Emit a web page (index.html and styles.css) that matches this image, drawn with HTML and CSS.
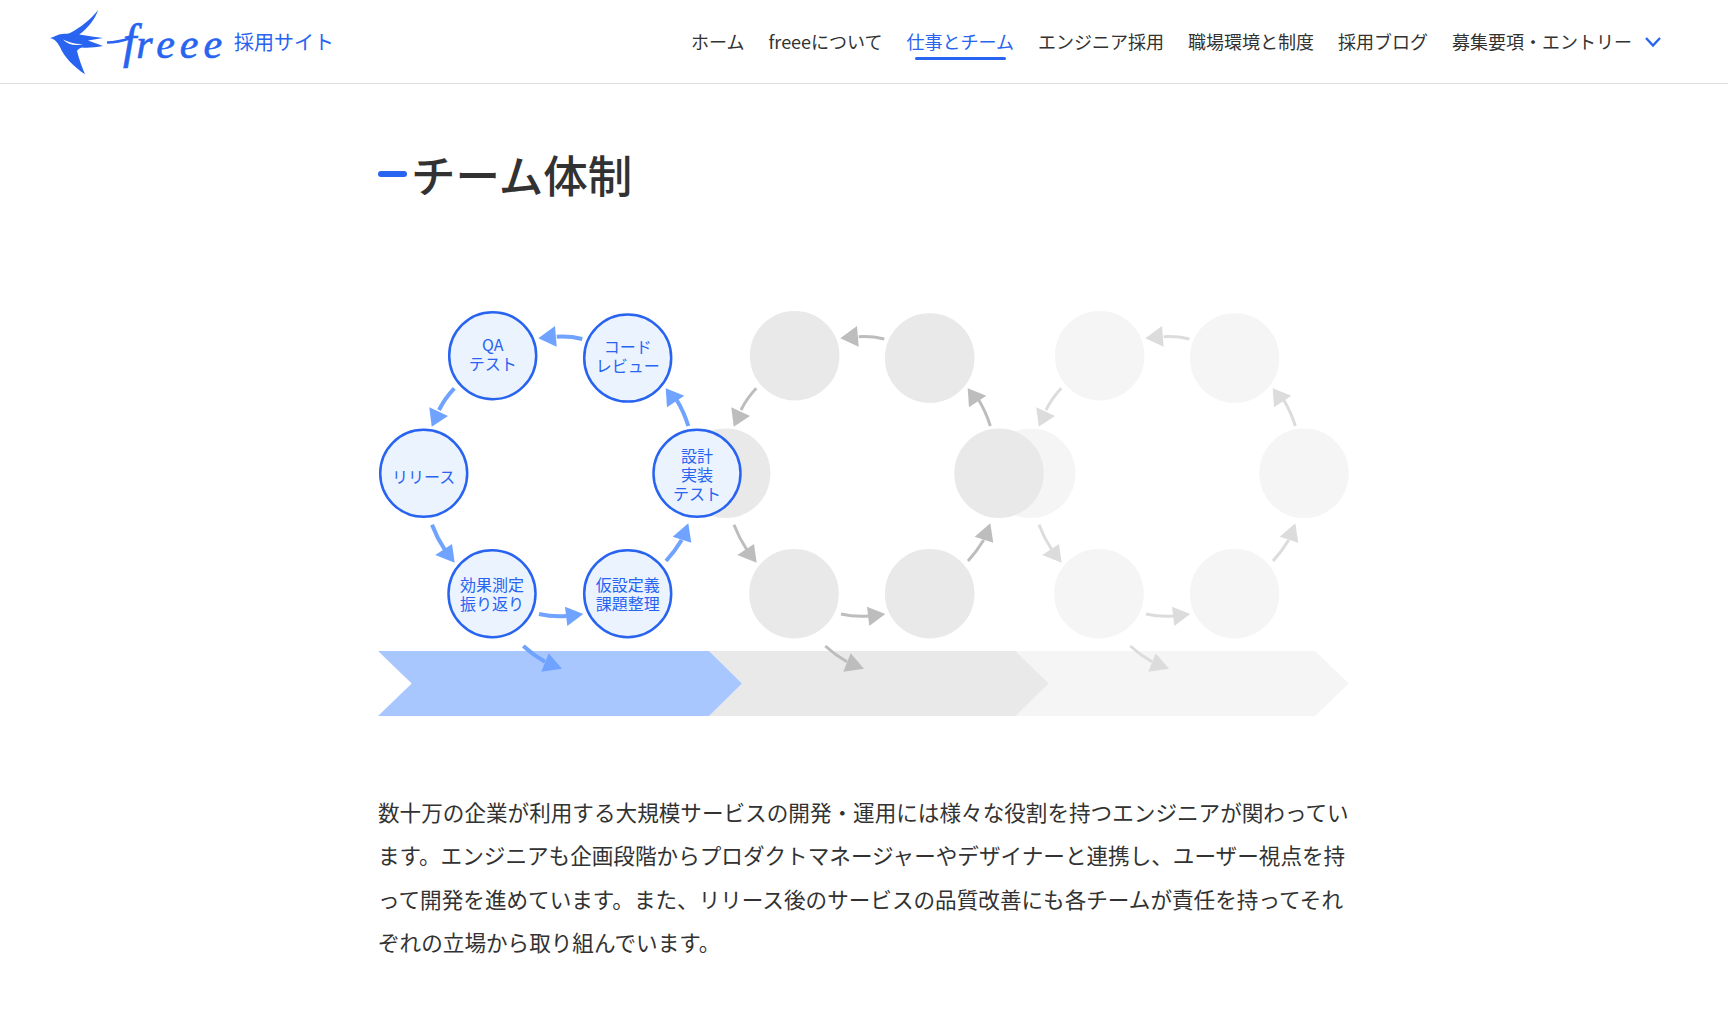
FILE: index.html
```html
<!DOCTYPE html>
<html lang="ja">
<head>
    <meta charset="UTF-8">
    <title>チーム体制 | freee 採用サイト</title>
    <link rel="stylesheet" href="styles.css">
</head>
<body>

    <header class="header">
        <a href="#" class="logo">
            <svg class="logo-bird" width="84" height="68" viewBox="48 7 84 68">
                <path d="M50 37.300 C54 36 58 33 62 33 C66 32.500 68 33 70 32 C80 27 91 18 98.300 9 C95 18 88 27 79.300 33.500 C88 35 96 36 103 37 L88 39.500 L103 45 C95 46.500 88 47 82 46.500 C80 47 78 48 77 50 C79 58 82 66 85 73.300 C74 66 64 56 60 46 C57 41 55 38 50 37.300 Z"/>
                <path class="logo-cut" d="M63 38.500 C69 41.500 76 43.500 83 43 C76 45 68 44 63 38.500 Z"/>
                <path class="logo-swash" d="M107 41.500 C114 41.500 122 40 131 37"/>
            </svg>
            <span class="logo-word"><span class="logo-f">f</span>reee</span>
            <span class="logo-sub">採用サイト</span>
        </a>
        <nav class="nav">
            <a href="#" class="nav-item">ホーム</a>
            <a href="#" class="nav-item">freeeについて</a>
            <a href="#" class="nav-item active">仕事とチーム</a>
            <a href="#" class="nav-item">エンジニア採用</a>
            <a href="#" class="nav-item">職場環境と制度</a>
            <a href="#" class="nav-item">採用ブログ</a>
            <a href="#" class="nav-item nav-more">募集要項・エントリー
                <svg class="nav-arrow" width="18" height="12" viewBox="0 0 18 12"><path d="M2 2 L9 9.500 L16 2" fill="none" stroke="#2864f0" stroke-width="2.400"/></svg>
            </a>
        </nav>
    </header>

    <main class="content">
        <h2 class="title">チーム体制</h2>

        <!-- viewBox uses page coordinates so the numbers are easy to compare -->
        <svg class="cycle" width="972" height="420" viewBox="378 300 972 420">
            <defs>
                <g id="dots">
                    <circle cx="492.700" cy="355.700" r="43.500"/>
                    <circle cx="627.700" cy="358" r="43.500"/>
                    <circle cx="423.700" cy="473.300" r="43.500"/>
                    <circle cx="697" cy="473.300" r="43.500"/>
                    <circle cx="492" cy="593.700" r="43.500"/>
                    <circle cx="627.700" cy="593.700" r="43.500"/>
                </g>
                <g id="arrows">
                    <path class="shaft" d="M582.300 339 Q570 336 556.700 336.700"/>
                    <polygon class="head" points="538.300,338.300 555,326 556.700,346.700"/>
                    <path class="shaft" d="M454.300 388.300 Q445 398 439 410"/>
                    <polygon class="head" points="431.700,426.700 429.300,407.300 448,416"/>
                    <path class="shaft" d="M688.300 426 Q684 412 676.700 400"/>
                    <polygon class="head" points="665.700,388.300 684.300,395.700 667,407.300"/>
                    <path class="shaft" d="M432 524.700 Q437 538 445 550"/>
                    <polygon class="head" points="454.700,562.700 452,544 435.300,555"/>
                    <path class="shaft" d="M539 614 Q552 617 566.700 616"/>
                    <polygon class="head" points="583.300,614 565,606.700 567.300,626"/>
                    <path class="shaft" d="M666 561 Q675 551 681.700 540"/>
                    <polygon class="head" points="688.300,523.300 672.700,536.700 691.300,542.700"/>
                    <path class="shaft" d="M523.300 646 Q533 655 545 661.700"/>
                    <polygon class="head" points="562,668.700 548.700,653.300 541.300,671.700"/>
                </g>
            </defs>

            <polygon class="band-light" points="1015.600,651 1315,651 1349,683.500 1315,716 1015.600,716 1048.800,683.500"/>
            <polygon class="band-grey" points="709,651 1015.600,651 1048.800,683.500 1015.600,716 709,716 742,683.500"/>
            <polygon class="band-blue" points="378,651 709,651 742,683.500 709,716 378,716 411.700,683.500"/>

            <use class="dots-light" href="#dots" x="607"/>
            <use class="arrows-light" href="#arrows" x="607"/>
            <use class="dots-grey" href="#dots" x="302"/>
            <use class="arrows-grey" href="#arrows" x="302"/>
            <use class="dots-blue" href="#dots"/>
            <use class="arrows-blue" href="#arrows"/>

            <g class="labels">
                <text x="492.700" y="351">QA</text>
                <text x="492.700" y="370">テスト</text>
                <text x="627.700" y="352.500">コード</text>
                <text x="627.700" y="371.500">レビュー</text>
                <text x="423.700" y="483">リリース</text>
                <text x="697" y="461.500">設計</text>
                <text x="697" y="480.500">実装</text>
                <text x="697" y="499.500">テスト</text>
                <text x="492" y="591">効果測定</text>
                <text x="492" y="610">振り返り</text>
                <text x="627.700" y="591">仮設定義</text>
                <text x="627.700" y="610">課題整理</text>
            </g>
        </svg>

        <p class="lead">数十万の企業が利用する大規模サービスの開発・運用には様々な役割を持つエンジニアが関わっています。エンジニアも企画段階からプロダクトマネージャーやデザイナーと連携し、ユーザー視点を持って開発を進めています。また、リリース後のサービスの品質改善にも各チームが責任を持ってそれぞれの立場から取り組んでいます。</p>
    </main>

</body>
</html>
```

FILE: styles.css
```css
body {
    margin: 0;
    font-family: "Noto Sans CJK JP", "Noto Sans", sans-serif;
    background-color: white;
    color: #323232;
}

/* Header */
.header {
    display: flex;
    justify-content: space-between;
    align-items: center;
    height: 83px;
    padding: 0 66px 0 48px;
    border-bottom: 1px solid #dedede;
}

.logo {
    display: flex;
    align-items: center;
    color: #2864f0;
    text-decoration: none;
}

.logo-bird {
    fill: #2864f0;
}

.logo-cut {
    fill: white;
}

.logo-swash {
    fill: none;
    stroke: #2864f0;
    stroke-width: 2.500px;
}

.logo-word {
    margin-left: -9px;
    font-family: "Liberation Serif", serif;
    font-style: italic;
    font-size: 42px;
    line-height: 1;
    letter-spacing: 5px;
    -webkit-text-stroke: 0.6px #2864f0;
}

.logo-f {
    font-size: 48px;
    letter-spacing: 0;
}

.logo-sub {
    margin-left: 7px;
    font-size: 20px;
}

.nav {
    display: flex;
    gap: 24px;
    align-items: center;
    margin-top: -2px;
}

.nav-item {
    position: relative;
    color: #323232;
    font-size: 18px;
    line-height: 32px;
    text-decoration: none;
}

.nav-item.active {
    color: #2864f0;
}

.nav-item.active::after {
    content: "";
    position: absolute;
    left: 8px;
    right: 8px;
    bottom: -3px;
    height: 3px;
    border-radius: 2px;
    background-color: #2864f0;
}

.nav-more {
    display: flex;
    align-items: center;
    gap: 12px;
}

.nav-arrow {
    margin-top: 2px;
}

/* Main content */
.content {
    width: 972px;
    margin: 0 auto;
}

.title {
    display: flex;
    align-items: center;
    gap: 4px;
    margin: 0;
    padding-top: 58px;
    font-size: 44.500px;
    font-weight: 500;
    line-height: 64px;
}

.title::before {
    content: "";
    width: 29px;
    height: 6px;
    border-radius: 3px;
    background-color: #2864f0;
}

.cycle {
    display: block;
    margin-top: 94px;
}

.shaft {
    fill: none;
    stroke: currentColor;
}

.head {
    fill: currentColor;
    stroke: none;
}

.band-blue { fill: #a8c7ff; }
.band-grey { fill: #e9e9e9; }
.band-light { fill: #f5f5f5; }

/* same radius for all dots, the stroke brings them to the full size */
.dots-blue {
    fill: #ebf3ff;
    stroke: #2864f0;
    stroke-width: 2.500px;
}
.dots-grey {
    fill: #e9e9e9;
    stroke: #e9e9e9;
    stroke-width: 2.500px;
}
.dots-light {
    fill: #f5f5f5;
    stroke: #f5f5f5;
    stroke-width: 2.500px;
}

.arrows-blue { color: #70a3ff; stroke-width: 4px; }
.arrows-grey { color: #bdbdbd; stroke-width: 3px; }
.arrows-light { color: #dcdcdc; stroke-width: 3px; }

.labels text {
    fill: #2864f0;
    font-size: 16px;
    text-anchor: middle;
}

.lead {
    margin: 70px 0 0;
    font-size: 21.600px;
    line-height: 43.300px;
}
```
